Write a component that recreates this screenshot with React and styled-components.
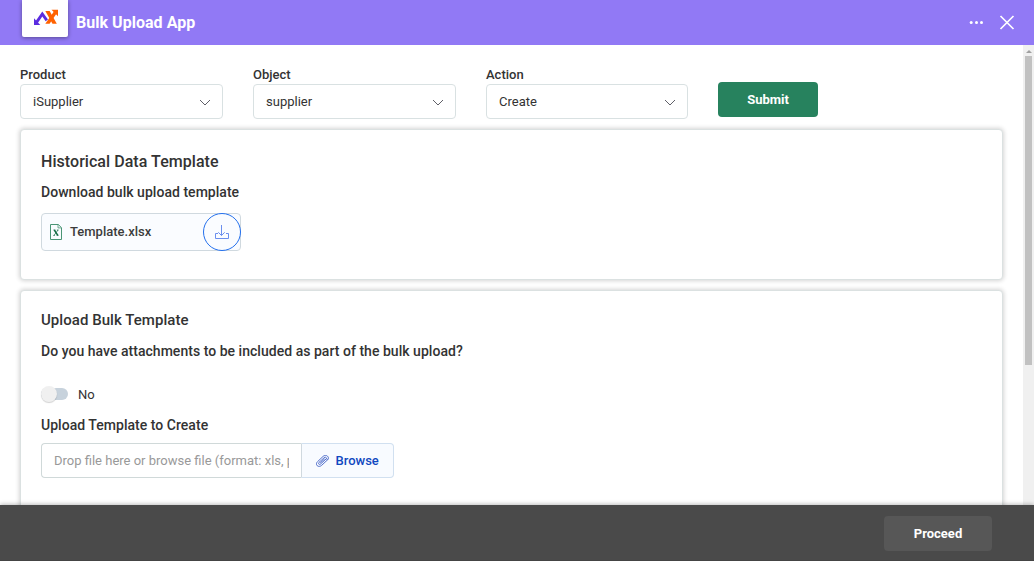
import React from "react";
import styled, { createGlobalStyle } from "styled-components";

const GlobalStyle = createGlobalStyle`
  * { box-sizing: border-box; }
  body { margin: 0; overflow: hidden; background: #fff; }
  h2, h3, p { margin: 0; }
  button, input { font-family: inherit; }
`;

const Page = styled.div`
  display: flex;
  flex-direction: column;
  height: 561px;
  font-family: Roboto, "Liberation Sans", sans-serif;
  color: #333;
`;

const Header = styled.header`
  display: flex;
  align-items: center;
  flex: none;
  height: 45px;
  padding: 0 19px 0 22px;
  background: #9179f5;
  color: #fff;
`;

const LogoTile = styled.div`
  align-self: flex-start;
  width: 46px;
  height: 37px;
  padding: 9px 0 0 12px;
  background: #fff;
  border-radius: 0 0 2px 2px;
  box-shadow: 0 1px 4px rgba(0, 0, 0, 0.4);
  svg { display: block; }
`;

const Title = styled.h2`
  flex: 1;
  margin-left: 8px;
  font-size: 16px;
  font-weight: 700;
  line-height: 20px;
  letter-spacing: 0.03px;
`;

const HeaderActions = styled.div`
  display: flex;
  align-items: center;
  gap: 16px;
  svg { display: block; }
`;

const Main = styled.div`
  display: flex;
  flex: 1;
  min-height: 0;
`;

const Content = styled.main`
  flex: 1;
  padding: 20px 20px 0;
  overflow: hidden;
`;

const Filters = styled.div`
  display: flex;
  align-items: flex-end;
  gap: 30px;
`;

const Field = styled.div`
  width: ${(p) => p.$width || 203}px;
`;

const Label = styled.div`
  height: 19px;
  font-size: 13px;
  font-weight: 500;
  line-height: 19px;
`;

const Select = styled.div`
  display: flex;
  align-items: center;
  justify-content: space-between;
  height: 35px;
  padding: 0 11px 0 12px;
  border: 1px solid #d9e1e2;
  border-radius: 4px;
  background: #fff;
  font-size: 13px;
`;

const SubmitButton = styled.button`
  width: 100px;
  height: 35px;
  margin-bottom: 2px;
  padding: 0;
  border: 0;
  border-radius: 4px;
  background: #27825e;
  color: #fff;
  font-size: 13px;
  font-weight: 700;
`;

const Card = styled.section`
  width: 983px;
  height: ${(p) => p.$height}px;
  margin-top: ${(p) => p.$gap}px;
  padding: ${(p) => p.$top}px 20px 0;
  border: 1px solid #dbe1e1;
  border-radius: 4px;
  background: #fff;
  box-shadow: 0 0 4px 1px rgba(0, 0, 0, 0.17);
`;

const CardTitle = styled.h2`
  font-size: ${(p) => p.$size}px;
  font-weight: 500;
  line-height: 22px;
  letter-spacing: 0.05px;
`;

const Question = styled.h3`
  margin-top: ${(p) => p.$gap}px;
  font-size: 14px;
  font-weight: 500;
  line-height: 20px;
  letter-spacing: 0.03px;
`;

const FileChip = styled.div`
  display: flex;
  align-items: center;
  width: 200px;
  height: 38px;
  margin-top: 11px;
  padding-left: 8px;
  border: 1px solid #d0d9df;
  border-radius: 4px;
  background: #fafcff;
`;

const FileName = styled.span`
  flex: 1;
  margin-left: 8px;
  padding-bottom: 2px;
  color: #3c3c3c;
  font-size: 13px;
  font-weight: 500;
`;

const DownloadButton = styled.button`
  display: flex;
  align-items: center;
  justify-content: center;
  flex: none;
  width: 38px;
  height: 38px;
  margin-right: -1px;
  padding: 0;
  border: 1px solid #2470ed;
  border-radius: 50%;
  background: #fafcff;
`;

const ToggleRow = styled.div`
  display: flex;
  align-items: center;
  height: 18px;
  margin-top: 24px;
  font-size: 13px;
`;

const Track = styled.div`
  display: flex;
  align-items: center;
  width: 27px;
  height: 12px;
  margin-right: 10px;
  border-radius: 6px;
  background: #c7d2dc;
`;

const Knob = styled.div`
  flex: none;
  width: 16px;
  height: 16px;
  margin-top: -1px;
  border-radius: 50%;
  background: #f0f0f0;
  box-shadow: 0 1px 1px rgba(0, 0, 0, 0.18);
`;

const Uploader = styled.div`
  display: flex;
  width: 353px;
  height: 35px;
  margin-top: 8px;
`;

const DropInput = styled.div`
  width: 260px;
  padding: 0 12px;
  border: 1px solid #d0d9d9;
  border-right: 0;
  border-radius: 4px 0 0 4px;
  color: #999;
  font-size: 13px;
  line-height: 33px;
`;

const ClippedText = styled.div`
  overflow: hidden;
  white-space: nowrap;
`;

const BrowseButton = styled.button`
  display: flex;
  align-items: center;
  flex: 1;
  gap: 6.5px;
  padding: 0 0 0 14px;
  border: 1px solid #d1e0f0;
  border-left-color: #d0d9df;
  border-radius: 0 4px 4px 0;
  background: #f8fbff;
  color: #1048c0;
  font-size: 13px;
  font-weight: 500;
`;

const Scrollbar = styled.div`
  display: flex;
  flex-direction: column;
  align-items: center;
  width: 11px;
  background: #f0f0f0;
`;

const ScrollArrow = styled.div`
  width: 0;
  height: 0;
  margin: 5px 0 3px;
  border: 3px solid transparent;
  border-top: 0;
  border-bottom-color: #a0a0a0;
`;

const Thumb = styled.div`
  width: 7px;
  height: 309px;
  background: #c1c1c1;
`;

const Footer = styled.footer`
  display: flex;
  flex: none;
  justify-content: flex-end;
  z-index: 1;
  height: 56px;
  padding: 11px 42px 0 0;
  background: #4a4a4a;
  border-bottom: 1px solid #444;
  box-shadow: 0 -1px 4px rgba(0, 0, 0, 0.25);
`;

const ProceedButton = styled.button`
  width: 108px;
  height: 35px;
  padding: 0;
  border: 0;
  border-radius: 4px;
  background: #575757;
  color: #fff;
  font-size: 13px;
  font-weight: 700;
`;

const Logo = () => (
  <svg width="24" height="16" viewBox="0 0 24 16">
    <path d="M2.500 13.300 8.300 5l4.500 6.400" fill="none" stroke="#5b2ce0" strokeWidth="2.900" />
    <path d="M0 9.300V16h6.300z" fill="#5b2ce0" />
    <path d="M11.300 2h4.300l7.200 12.700h-4.300z" fill="#ff6200" />
    <path d="M11.300 14.700h4.300l6.800-10-2.500-2.200z" fill="#ff6200" />
    <path d="M17.500.8H24v6.400z" fill="#ff6200" />
  </svg>
);

const Chevron = () => (
  <svg width="12" height="8" viewBox="0 0 12 8" fill="none" stroke="#606068" strokeWidth="1">
    <path d="m1 2 5 5 5-5" />
  </svg>
);

const MoreIcon = () => (
  <svg width="14" height="4" viewBox="0 0 14 4" fill="#fff">
    <circle cx="2.2" cy="1.500" r="1.500" />
    <circle cx="7.500" cy="1.500" r="1.500" />
    <circle cx="12.500" cy="1.500" r="1.500" />
  </svg>
);

const CloseIcon = () => (
  <svg width="16" height="16" viewBox="0 0 16 16" stroke="#fff" strokeWidth="1.7">
    <path d="m1.500 1 13 13m0-13-13 13" />
  </svg>
);

const SheetIcon = () => (
  <svg width="12" height="16" viewBox="0 0 12 16" fill="none" stroke="#4a9575">
    <path d="M.5.5h7.800l3.200 3.200v11.800H.5z" />
    <path d="M8 .5v3.400h3.500" strokeWidth=".8" />
    <path d="m4.300 6 3.500 5.400" stroke="#126b44" strokeWidth="1.500" />
    <path d="M8 6 4 11.400M3.400 6h2M6.900 6h1.700M3.300 11.400H5M6.600 11.400h2" stroke="#126b44" strokeWidth=".7" />
  </svg>
);

const DownloadIcon = () => (
  <svg width="14" height="14" viewBox="0 0 14 14" fill="none" stroke="#6b8fee" strokeWidth="1">
    <path d="M6.500 0v10.500M3.300 7.300l3.200 3.200 3.200-3.200M3 8.500H.5v5h13v-5H11" />
  </svg>
);

const ClipIcon = () => (
  <svg width="13" height="12" viewBox="0 0 13 12" fill="none" stroke="#4262c6" strokeWidth=".9" strokeLinecap="round">
    <path d="m10.200 3.800-5.600 5.200c-.6.6-1.400.6-1.800.1s-.3-1.200.2-1.700L8.300 2.600" />
    <path d="m8.300 2.600c.6-.6 1.400-.5 1.900 0s.5 1.200-.1 1.800" />
    <path d="m12 4.400-6.300 5.900c-1.400 1.300-3.300 1.500-4.500.4S.2 7.900 1.500 6.700l5.700-5.400c1.400-1.300 3.100-1.100 4.200-.2s1.500 2.300.4 3.500M8.400 4.100 4.500 7.700" />
  </svg>
);

const filters = [
  { label: "Product", value: "iSupplier", width: 203 },
  { label: "Object", value: "supplier", width: 203 },
  { label: "Action", value: "Create", width: 202 },
];

export default function App() {
  return (
    <Page>
      <GlobalStyle />
      <Header>
        <LogoTile><Logo /></LogoTile>
        <Title>Bulk Upload App</Title>
        <HeaderActions>
          <MoreIcon />
          <CloseIcon />
        </HeaderActions>
      </Header>
      <Main>
        <Content>
          <Filters>
            {filters.map((f) => (
              <Field key={f.label} $width={f.width}>
                <Label>{f.label}</Label>
                <Select>{f.value}<Chevron /></Select>
              </Field>
            ))}
            <SubmitButton>Submit</SubmitButton>
          </Filters>
          <Card $height={151} $gap={10} $top={21}>
            <CardTitle $size={16}>Historical Data Template</CardTitle>
            <Question $gap={9}>Download bulk upload template</Question>
            <FileChip>
              <SheetIcon />
              <FileName>Template.xlsx</FileName>
              <DownloadButton aria-label="Download"><DownloadIcon /></DownloadButton>
            </FileChip>
          </Card>
          <Card $height={300} $gap={10} $top={18}>
            <CardTitle $size={15}>Upload Bulk Template</CardTitle>
            <Question $gap={10}>Do you have attachments to be included as part of the bulk upload?</Question>
            <ToggleRow><Track><Knob /></Track>No</ToggleRow>
            <Question $gap={12}>Upload Template to Create</Question>
            <Uploader>
              <DropInput><ClippedText>Drop file here or browse file (format: xls, png, pdf)</ClippedText></DropInput>
              <BrowseButton><ClipIcon />Browse</BrowseButton>
            </Uploader>
          </Card>
        </Content>
        <Scrollbar><ScrollArrow /><Thumb /></Scrollbar>
      </Main>
      <Footer><ProceedButton>Proceed</ProceedButton></Footer>
    </Page>
  );
}
